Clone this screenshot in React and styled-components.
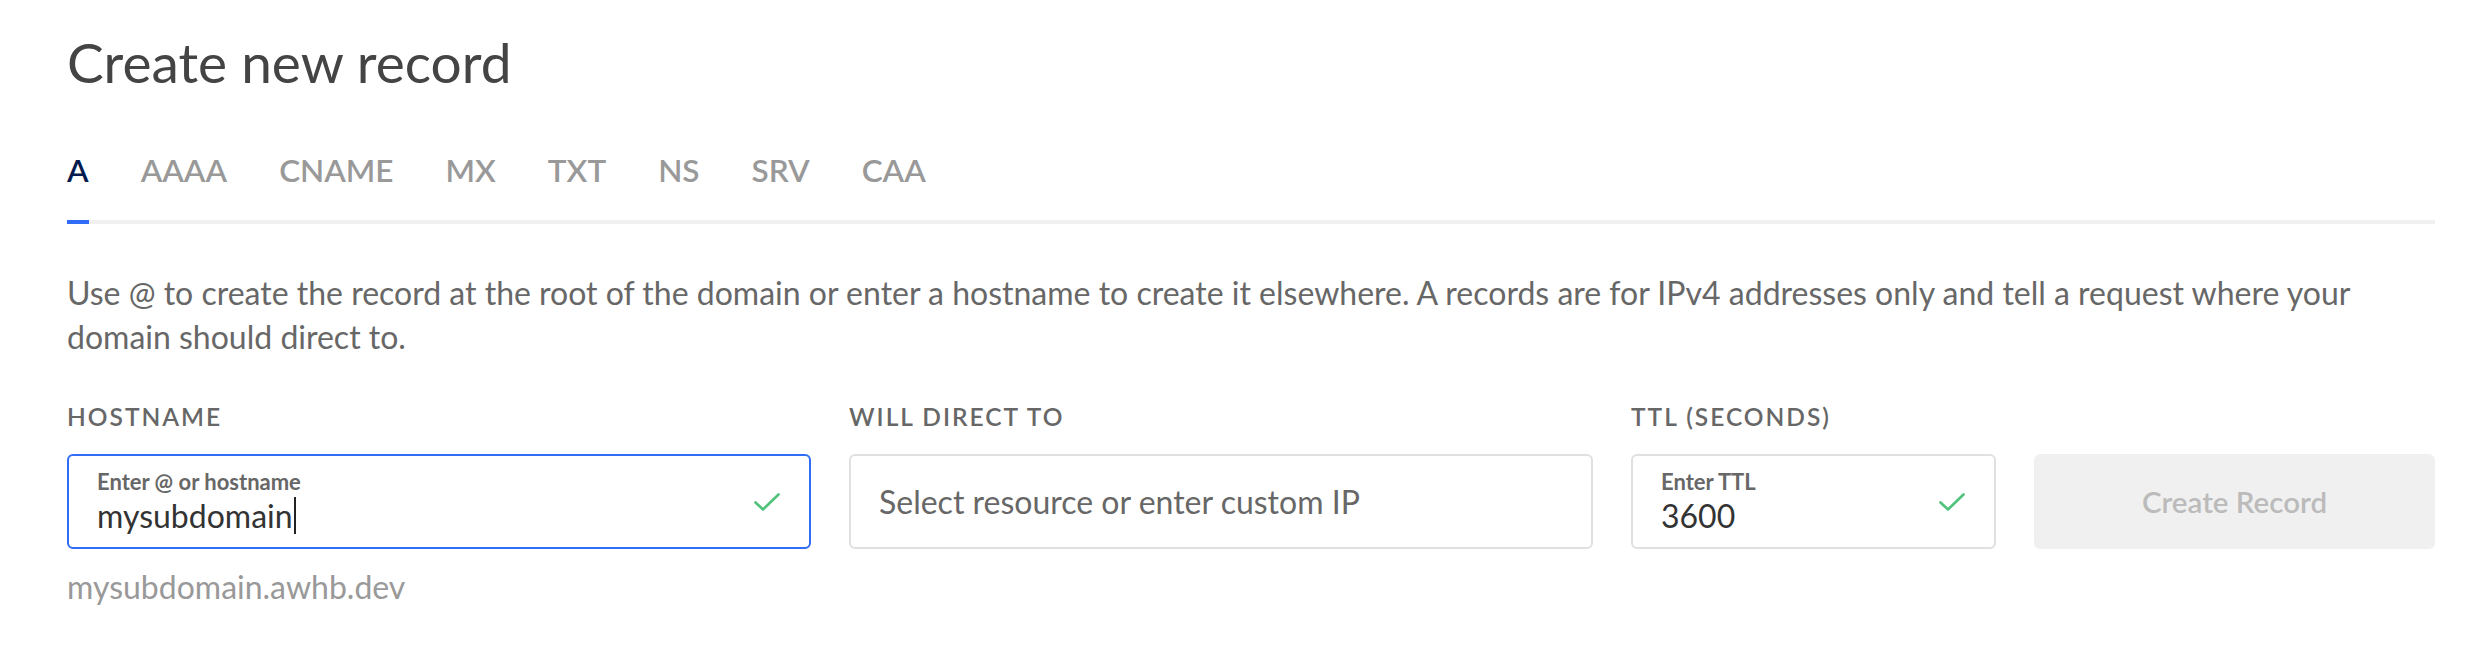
import React from 'react';
import styled, { createGlobalStyle } from 'styled-components';

const GlobalStyle = createGlobalStyle`
  html, body { margin: 0; padding: 0; background: #ffffff; }
  body {
    font-family: Lato, "Noto Sans", Arial, sans-serif;
    -webkit-font-smoothing: antialiased;
  }
  * { box-sizing: border-box; }
`;

const Page = styled.div`
  padding: 29px 39px 0 67px;
`;

const Title = styled.h1`
  margin: 0;
  font-size: 55px;
  line-height: 66px;
  font-weight: 400;
  color: #444444;
`;

const TabList = styled.div`
  display: flex;
  gap: 52px;
  margin-top: 56px;
  border-bottom: 4px solid #f0f0f0;
`;

const Tab = styled.div`
  font-size: 31.5px;
  line-height: 38px;
  font-weight: 600;
  padding-bottom: 31px;
  margin-bottom: -4px;
  color: ${p => (p.$active ? '#031b4e' : '#999999')};
  border-bottom: 4px solid ${p => (p.$active ? '#2f6df6' : 'transparent')};
`;

const Description = styled.p`
  margin: 47px 0 0;
  font-size: 32px;
  line-height: 44px;
  color: #676767;
`;

const FormGrid = styled.div`
  display: grid;
  grid-template-columns: 744px 744px 365px 1fr;
  column-gap: 38px;
  margin-top: 43px;
`;

const Label = styled.div`
  grid-row: 1;
  font-size: 24.5px;
  line-height: 30px;
  font-weight: 600;
  letter-spacing: 2px;
  text-transform: uppercase;
  color: #676767;
  margin-bottom: 22px;
`;

const InputBox = styled.div`
  grid-row: 2;
  display: flex;
  align-items: center;
  height: 95px;
  padding: 0 29px 0 28px;
  border: 2px solid ${p => (p.$focused ? '#2f6df6' : '#e0e0e0')};
  border-radius: 6px;
  background: #ffffff;
`;

const InputContent = styled.div`
  flex: 1;
  display: flex;
  flex-direction: column;
  min-width: 0;
`;

const FloatLabel = styled.div`
  font-size: 22px;
  line-height: 26px;
  font-weight: 700;
  color: #676767;
  margin-bottom: 2px;
`;

const Value = styled.div`
  font-size: 32px;
  line-height: 38px;
  color: #333333;
  display: flex;
  align-items: center;
`;

const Caret = styled.span`
  display: inline-block;
  width: 2px;
  height: 37px;
  background: #222222;
  margin-left: 1px;
`;

const Placeholder = styled.div`
  font-size: 32px;
  line-height: 38px;
  color: #676767;
`;

const CreateButton = styled.button`
  grid-column: 4;
  grid-row: 2;
  height: 95px;
  border: none;
  border-radius: 6px;
  background: #f0f0f0;
  color: #bbbbbb;
  font-family: inherit;
  font-size: 29.5px;
  font-weight: 600;
  cursor: not-allowed;
`;

const Helper = styled.div`
  grid-column: 1;
  grid-row: 3;
  margin-top: 19px;
  font-size: 32px;
  line-height: 38px;
  color: #999999;
`;

const Check = () => (
  <svg width="26" height="18" viewBox="0 0 26 18" fill="none">
    <polyline
      points="1.5,9.5 9,16.5 24.5,1.5"
      stroke="#4fc27b"
      strokeWidth="2.6"
      strokeLinecap="round"
      strokeLinejoin="round"
    />
  </svg>
);

const tabs = ['A', 'AAAA', 'CNAME', 'MX', 'TXT', 'NS', 'SRV', 'CAA'];

export default function App() {
  return (
    <>
      <GlobalStyle />
      <Page>
        <Title>Create new record</Title>
        <TabList>
          {tabs.map(t => (
            <Tab key={t} $active={t === 'A'}>{t}</Tab>
          ))}
        </TabList>
        <Description>
          Use @ to create the record at the root of the domain or enter a hostname to create it
          elsewhere. A records are for IPv4 addresses only and tell a request where your domain
          should direct to.
        </Description>
        <FormGrid>
          <Label>Hostname</Label>
          <Label>Will direct to</Label>
          <Label>TTL (seconds)</Label>
          <InputBox $focused>
            <InputContent>
              <FloatLabel>Enter @ or hostname</FloatLabel>
              <Value>mysubdomain<Caret /></Value>
            </InputContent>
            <Check />
          </InputBox>
          <InputBox>
            <Placeholder>Select resource or enter custom IP</Placeholder>
          </InputBox>
          <InputBox>
            <InputContent>
              <FloatLabel>Enter TTL</FloatLabel>
              <Value>3600</Value>
            </InputContent>
            <Check />
          </InputBox>
          <CreateButton disabled>Create Record</CreateButton>
          <Helper>mysubdomain.awhb.dev</Helper>
        </FormGrid>
      </Page>
    </>
  );
}
